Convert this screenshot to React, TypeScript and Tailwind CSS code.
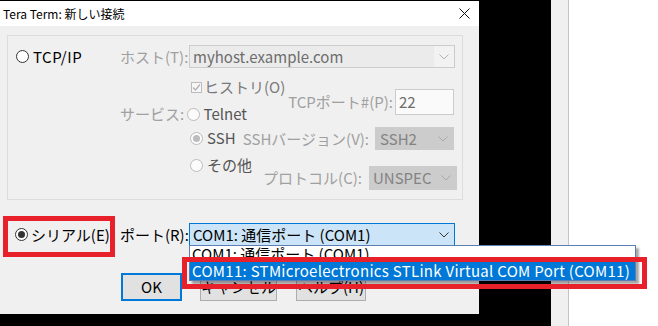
import React from "react";

function Radio({ checked = false, disabled = false }: { checked?: boolean; disabled?: boolean }) {
  return (
    <span
      className={
        disabled
          ? "w-[13px] h-[13px] rounded-full border border-[#bcbcbc] bg-[#fbfbfb] flex items-center justify-center shrink-0"
          : "w-[13px] h-[13px] rounded-full border border-[#333333] bg-white flex items-center justify-center shrink-0"
      }
    >
      {checked && (
        <span className={disabled ? "w-[7px] h-[7px] rounded-full bg-[#bcbcbc]" : "w-[7px] h-[7px] rounded-full bg-[#333333]"} />
      )}
    </span>
  );
}

function Chevron({ color }: { color: string }) {
  return (
    <svg width="10" height="6" viewBox="0 0 10 6" className="shrink-0">
      <path d="M0.5 0.5 L5 5 L9.5 0.5" fill="none" stroke={color} strokeWidth="1" />
    </svg>
  );
}

export default function App() {
  return (
    <div
      className="w-[658px] h-[326px] flex bg-white overflow-hidden relative text-[15px] leading-[18px]"
      style={{ fontFamily: '"Noto Sans CJK JP", "Noto Sans", sans-serif' }}
    >
      {/* Dialog */}
      <div className="w-[479px] h-full flex flex-col shrink-0">
        <div className="h-[1px] bg-black shrink-0" />
        <div className="h-[25px] bg-white flex items-center justify-between pl-[3px] pr-[9px] shrink-0">
          <span className="text-[12px] leading-[14px] text-black">Tera Term: 新しい接続</span>
          <svg width="11" height="11" viewBox="0 0 11 11">
            <path d="M0.5 0.5 L10.5 10.5 M10.5 0.5 L0.5 10.5" stroke="#111" strokeWidth="1" />
          </svg>
        </div>
        <div className="h-[288px] bg-[#f0f0f0] pt-[9px] px-[7px] flex flex-col shrink-0">
          {/* Group box */}
          <div className="w-[456px] h-[165px] border border-[#dcdcdc] flex flex-col shrink-0">
            <div className="h-[23px] mt-[9px] pl-[8px] flex items-center">
              <div className="w-[104px] flex items-center gap-[4px]">
                <Radio />
                <span className="text-black tracking-[0.5px]">TCP/IP</span>
              </div>
              <span className="w-[69px] text-[#a0a0a0]">ホスト(T):</span>
              <div className="w-[266px] h-[23px] border border-[#cccccc] bg-[#ebebeb] flex items-center">
                <span className="flex-1 pl-[3px] text-[#6d6d6d]">myhost.example.com</span>
                <span className="w-[20px] h-full bg-[#f2f2f2] flex items-center justify-center">
                  <Chevron color="#b5b5b5" />
                </span>
              </div>
            </div>
            <div className="flex">
              {/* left column */}
              <div className="w-[127px] ml-[112px] flex flex-col">
                <div className="h-[14px] mt-[12px] pl-[71px] flex items-center gap-[2px]">
                  <span className="w-[11px] h-[11px] border border-[#bcbcbc] bg-[#f6f6f6] flex items-center justify-center shrink-0">
                    <svg width="9" height="9" viewBox="0 0 9 9">
                      <path d="M1 4.5 L3.5 7 L8 1.5" fill="none" stroke="#b0b0b0" strokeWidth="1.2" />
                    </svg>
                  </span>
                  <span className="text-[#7a7a7a] whitespace-nowrap">ヒストリ(O)</span>
                </div>
                <div className="h-[20px] mt-[10px] flex items-center">
                  <span className="w-[70px] text-[#a0a0a0] whitespace-nowrap">サービス:</span>
                  <Radio disabled />
                  <span className="ml-[4px] text-[#555555]">Telnet</span>
                </div>
                <div className="h-[20px] mt-[4px] pl-[70px] flex items-center">
                  <Radio checked disabled />
                  <span className="ml-[4px] text-[#555555]">SSH</span>
                </div>
                <div className="h-[20px] mt-[7px] pl-[70px] flex items-center">
                  <Radio disabled />
                  <span className="ml-[4px] text-[#555555] whitespace-nowrap">その他</span>
                </div>
              </div>
              {/* right column */}
              <div className="w-[210px] flex flex-col items-end">
                <div className="h-[26px] mt-[21px] mr-[3px] flex items-center">
                  <span className="text-[#a0a0a0] whitespace-nowrap">TCPポート#(P):</span>
                  <div className="ml-[2px] w-[59px] h-[26px] border border-[#cccccc] bg-[#fafafa] flex items-center pl-[3px] text-[#6d6d6d]">
                    22
                  </div>
                </div>
                <div className="h-[23px] mt-[12px] mr-[3px] flex items-center">
                  <span className="text-[#a0a0a0] whitespace-nowrap">SSHバージョン(V):</span>
                  <div className="ml-[6px] w-[79px] h-[23px] bg-[#cccccc] flex items-center pl-[5px] pr-[6px] justify-between">
                    <span className="text-[#838383]">SSH2</span>
                    <Chevron color="#a8a8a8" />
                  </div>
                </div>
                <div className="h-[24px] mt-[16px] flex items-center">
                  <span className="text-[#a0a0a0] whitespace-nowrap">プロトコル(C):</span>
                  <div className="ml-[7px] w-[88px] h-[24px] bg-[#cccccc] flex items-center pl-[4px] pr-[6px] justify-between">
                    <span className="text-[#838383]">UNSPEC</span>
                    <Chevron color="#a8a8a8" />
                  </div>
                </div>
              </div>
            </div>
          </div>
          {/* Serial row */}
          <div className="h-[23px] mt-[23px] pl-[8px] flex items-center">
            <div className="w-[105px] flex items-center gap-[3px]">
              <Radio checked />
              <span className="text-black whitespace-nowrap">シリアル(E)</span>
            </div>
            <span className="w-[69px] text-black whitespace-nowrap">ポート(R):</span>
            <div className="w-[266px] h-[23px] border border-[#0078d7] bg-[#cce4f7] flex items-center justify-between pl-[3px] pr-[5px]">
              <span className="text-black whitespace-nowrap">COM1: 通信ポート (COM1)</span>
              <Chevron color="#333333" />
            </div>
          </div>
          {/* Buttons */}
          <div className="h-[28px] mt-[27px] pl-[114px] flex">
            <div className="w-[61px] h-[28px] border-2 border-[#0078d7] bg-[#e1e1e1] flex items-center justify-center text-black">
              OK
            </div>
            <div className="w-[77px] h-[28px] ml-[18px] border border-[#adadad] bg-[#e1e1e1] flex items-center justify-center text-black">
              キャンセル
            </div>
            <div className="w-[70px] h-[28px] ml-[19px] border border-[#adadad] bg-[#e1e1e1] flex items-center justify-center text-black">
              ヘルプ(H)
            </div>
          </div>
        </div>
        <div className="flex-1 bg-black" />
      </div>
      <div className="w-[72px] h-full bg-black shrink-0" />
      <div className="w-[18px] h-full bg-[#f0f0f0] border-r border-[#c4c4c4] shrink-0" />
      <div className="flex-1 h-full bg-white" />

      {/* Dropdown list overlay */}
      <div className="absolute left-[189px] top-[245px] w-[447px] border border-[#5b7fb4] bg-white flex flex-col shadow-[3px_3px_2px_rgba(0,0,0,0.35)]">
        <div className="h-[16px] pl-[2px] flex items-center text-black whitespace-nowrap">COM1: 通信ポート (COM1)</div>
        <div className="h-[18px] pl-[2px] flex items-center bg-[#0078d7] text-white whitespace-nowrap tracking-[0.3px]">
          COM11: STMicroelectronics STLink Virtual COM Port (COM11)
        </div>
      </div>

      {/* Red annotation boxes */}
      <div className="absolute left-[3px] top-[216px] w-[112px] h-[41px] border-[5px] border-[#e8202a]" />
      <div className="absolute left-[182px] top-[257px] w-[465px] h-[32px] border-[5px] border-[#e8202a]" />
    </div>
  );
}
